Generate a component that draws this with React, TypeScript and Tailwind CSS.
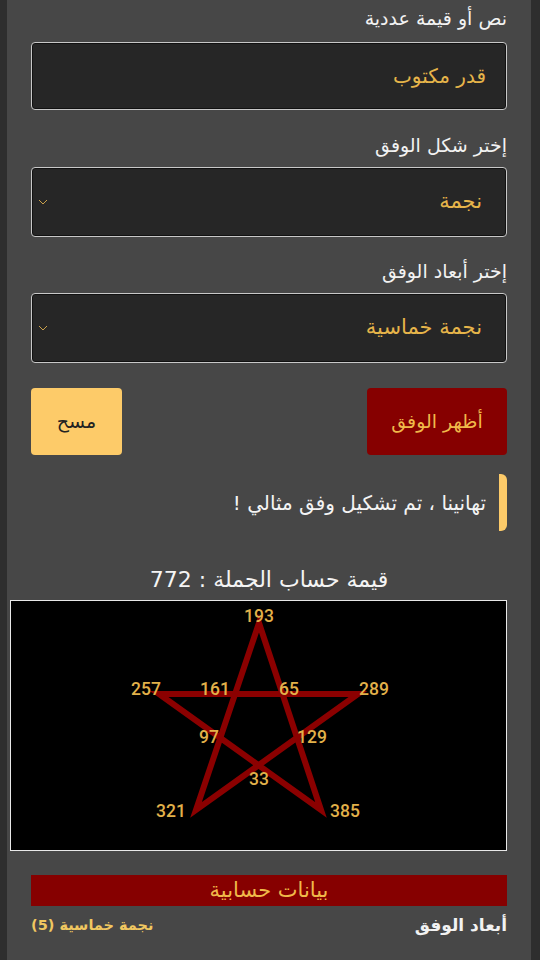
import React from 'react';

const arabic = { fontFamily: '"DejaVu Sans", "Noto Sans", sans-serif' };

const labels: { n: string; x: number; y: number }[] = [
  { n: '193', x: 248, y: 15 },
  { n: '257', x: 135, y: 88 },
  { n: '161', x: 204, y: 88 },
  { n: '65', x: 278, y: 88 },
  { n: '289', x: 363, y: 88 },
  { n: '97', x: 198, y: 136 },
  { n: '129', x: 301, y: 136 },
  { n: '33', x: 248, y: 178 },
  { n: '321', x: 160, y: 210 },
  { n: '385', x: 334, y: 210 },
];

const Chevron = () => (
  <svg width="10" height="6" viewBox="0 0 10 6" className="shrink-0">
    <path d="M1 1l4 4 4-4" fill="none" stroke="#c9a04a" strokeWidth="1" />
  </svg>
);

const Select = ({ value }: { value: string }) => (
  <div className="h-[70px] rounded-[4px] border-[1.5px] border-[#c8c8c8] bg-[#262626] flex items-center justify-between pr-[24px] pl-[6px] shadow-[inset_0_0_0_1px_#111]">
    <span className="text-[21px] text-[#e6b54a]">{value}</span>
    <Chevron />
  </div>
);

export default function App() {
  return (
    <div className="min-h-screen bg-[#2e2e2e] pl-[7px] pr-[9px]" style={arabic}>
      <div dir="rtl" className="bg-[#474747] min-h-screen px-[24px] pt-[6px] pb-8">
        {/* input */}
        <label className="block text-[19px] text-[#f2f2f2] leading-[24px]">نص أو قيمة عددية</label>
        <div className="mt-[12px] h-[68px] rounded-[4px] border-[1.5px] border-[#c8c8c8] bg-[#262626] flex items-center pr-[20px] shadow-[inset_0_0_0_1px_#111]">
          <span className="text-[20px] text-[#e6b54a]">قدر مكتوب</span>
        </div>

        <label className="block mt-[23px] text-[19px] text-[#f2f2f2] leading-[24px]">إختر شكل الوفق</label>
        <div className="mt-[10px]">
          <Select value="نجمة" />
        </div>

        <label className="block mt-[22px] text-[19px] text-[#f2f2f2] leading-[24px]">إختر أبعاد الوفق</label>
        <div className="mt-[10px]">
          <Select value="نجمة خماسية" />
        </div>

        {/* buttons */}
        <div className="mt-[25px] flex justify-between">
          <button className="w-[140px] h-[67px] rounded-[4px] bg-[#860000] text-[#f0b94a] text-[19px]">أظهر الوفق</button>
          <button className="w-[91px] h-[67px] rounded-[4px] bg-[#fdcb69] text-[#222] text-[19px]">مسح</button>
        </div>

        {/* alert */}
        <div className="mt-[19px] h-[57px] rounded-[6px] border-r-[8px] border-[#fdcb69] flex items-center pr-[13px]">
          <span className="text-[20px] text-[#f4f4f4]">تهانينا ، تم تشكيل وفق مثالي !</span>
        </div>

        {/* result */}
        <div className="mt-[35px] text-center text-[22px] leading-[28px] text-[#f4f4f4]">قيمة حساب الجملة : 772</div>

        <div dir="ltr" className="mt-[6px] -ml-[21px] h-[251px] bg-black border-[1.5px] border-[#e8e8e8]">
          <svg width="494" height="248" viewBox="0 0 494 248">
            <polygon
              points="248,22 185,209 347,93 148,93 310,209"
              fill="none"
              stroke="#8b0000"
              strokeWidth="6"
              strokeLinejoin="miter"
            />
            {labels.map((l) => (
              <text
                key={l.n}
                x={l.x}
                y={l.y}
                textAnchor="middle"
                dominantBaseline="central"
                fill="#e2b14a"
                fontSize="17.5"
                fontWeight="500"
                fontFamily="Roboto, sans-serif"
              >
                {l.n}
              </text>
            ))}
          </svg>
        </div>

        {/* data */}
        <div className="mt-[24px] h-[31px] bg-[#860000] flex items-center justify-center">
          <span className="text-[21px] text-[#f0b94a]">بيانات حسابية</span>
        </div>
        <div className="mt-[6px] flex justify-between items-center h-[28px]">
          <span className="text-[17px] font-bold text-[#f2f2f2]">أبعاد الوفق</span>
          <span className="text-[14.5px] font-bold text-[#f0c760]">نجمة خماسية (5)</span>
        </div>
        <div className="mt-[14px] flex justify-between items-center h-[28px]">
          <span className="text-[17px] font-bold text-[#f2f2f2]">عدد الخانات</span>
          <span className="text-[14.5px] font-bold text-[#f0c760]">10</span>
        </div>
      </div>
    </div>
  );
}
